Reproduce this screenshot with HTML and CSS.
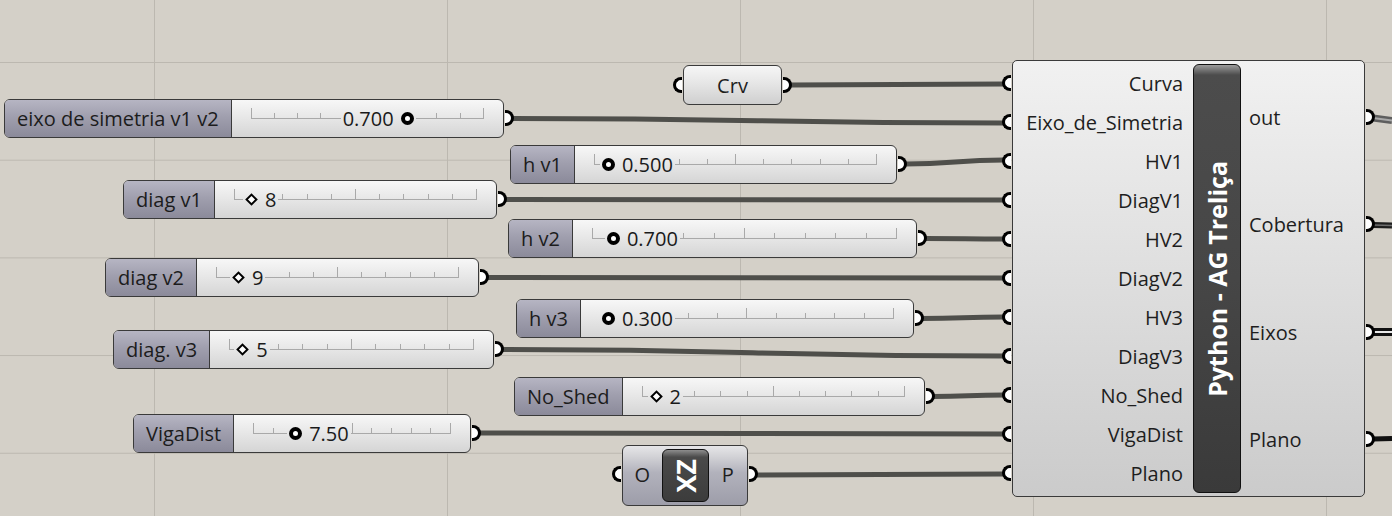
FILE: index.html
```html
<!DOCTYPE html>
<html>
<head>
<meta charset="utf-8">
<link rel="stylesheet" href="styles.css">
</head>
<body>
<div class="canvas">
  <svg class="wires" width="1392" height="516" viewBox="0 0 1392 516">
    <g class="wire">
      <path d="M791 85 C897 85 897 84 1004 84"/>
      <path d="M512 118.5 C758 118.5 758 123 1004 123"/>
      <path d="M905 164 C955 164 955 160 1004 160"/>
      <path d="M505 199.5 C755 199.5 755 200 1004 200"/>
      <path d="M925 238.5 C965 238.5 965 239 1004 239"/>
      <path d="M487 277.5 C745 277.5 745 278 1004 278"/>
      <path d="M922 318.5 C963 318.5 963 317 1004 317"/>
      <path d="M502 349.5 C753 349.5 753 356 1004 356"/>
      <path d="M933 396.5 C968 396.5 968 395 1004 395"/>
      <path d="M479 433 C741 433 741 434 1004 434"/>
      <path d="M756 475 C880 475 880 474 1004 474"/>
    </g>
    <path class="w-out-a" d="M1373 118 L1392 120.5"/>
    <path class="w-out-b" d="M1373 118 L1392 120.5"/>
    <path class="w-cob-a" d="M1373 225 L1392 225.5"/>
    <path class="w-cob-b" d="M1373 225 L1392 225.5"/>
    <path class="w-eix-a" d="M1373 332 L1392 332"/>
    <path class="w-eix-b" d="M1373 332 L1392 332"/>
    <path class="w-pla" d="M1373 439 L1392 438.5"/>
  </svg>

  <!-- sliders -->
  <div class="node slider" style="left:4px;top:99px;width:500px">
    <div class="slabel">eixo de simetria v1 v2</div>
    <div class="sbody">
      <div class="track"><i class="tick major"></i><i class="tick"></i><i class="tick"></i><i class="tick"></i><i class="tick"></i><i class="tick major"></i><i class="tick"></i><i class="tick"></i><i class="tick"></i><i class="tick"></i><i class="tick major"></i></div>
      <div class="val" style="left:109px"><span class="num">0.700</span><span class="dot"></span></div>
    </div>
    <span class="grip out"></span>
  </div>

  <div class="node slider" style="left:510px;top:145px;width:387px">
    <div class="slabel">h v1</div>
    <div class="sbody">
      <div class="track"><i class="tick major"></i><i class="tick"></i><i class="tick"></i><i class="tick"></i><i class="tick"></i><i class="tick major"></i><i class="tick"></i><i class="tick"></i><i class="tick"></i><i class="tick"></i><i class="tick major"></i></div>
      <div class="val" style="left:25px"><span class="dot"></span><span class="num">0.500</span></div>
    </div>
    <span class="grip out"></span>
  </div>

  <div class="node slider" style="left:123px;top:180px;width:374px">
    <div class="slabel">diag v1</div>
    <div class="sbody">
      <div class="track"><i class="tick major"></i><i class="tick"></i><i class="tick"></i><i class="tick"></i><i class="tick"></i><i class="tick major"></i><i class="tick"></i><i class="tick"></i><i class="tick"></i><i class="tick"></i><i class="tick major"></i></div>
      <div class="val" style="left:28px"><span class="dia"></span><span class="num">8</span></div>
    </div>
    <span class="grip out"></span>
  </div>

  <div class="node slider" style="left:508px;top:219px;width:409px">
    <div class="slabel">h v2</div>
    <div class="sbody">
      <div class="track"><i class="tick major"></i><i class="tick"></i><i class="tick"></i><i class="tick"></i><i class="tick"></i><i class="tick major"></i><i class="tick"></i><i class="tick"></i><i class="tick"></i><i class="tick"></i><i class="tick major"></i></div>
      <div class="val" style="left:32px"><span class="dot"></span><span class="num">0.700</span></div>
    </div>
    <span class="grip out"></span>
  </div>

  <div class="node slider" style="left:105px;top:258px;width:374px">
    <div class="slabel">diag v2</div>
    <div class="sbody">
      <div class="track"><i class="tick major"></i><i class="tick"></i><i class="tick"></i><i class="tick"></i><i class="tick"></i><i class="tick major"></i><i class="tick"></i><i class="tick"></i><i class="tick"></i><i class="tick"></i><i class="tick major"></i></div>
      <div class="val" style="left:33px"><span class="dia"></span><span class="num">9</span></div>
    </div>
    <span class="grip out"></span>
  </div>

  <div class="node slider" style="left:516px;top:299px;width:398px">
    <div class="slabel">h v3</div>
    <div class="sbody">
      <div class="track"><i class="tick major"></i><i class="tick"></i><i class="tick"></i><i class="tick"></i><i class="tick"></i><i class="tick major"></i><i class="tick"></i><i class="tick"></i><i class="tick"></i><i class="tick"></i><i class="tick major"></i></div>
      <div class="val" style="left:19px"><span class="dot"></span><span class="num">0.300</span></div>
    </div>
    <span class="grip out"></span>
  </div>

  <div class="node slider" style="left:113px;top:330px;width:381px">
    <div class="slabel">diag. v3</div>
    <div class="sbody">
      <div class="track"><i class="tick major"></i><i class="tick"></i><i class="tick"></i><i class="tick"></i><i class="tick"></i><i class="tick major"></i><i class="tick"></i><i class="tick"></i><i class="tick"></i><i class="tick"></i><i class="tick major"></i></div>
      <div class="val" style="left:24px"><span class="dia"></span><span class="num">5</span></div>
    </div>
    <span class="grip out"></span>
  </div>

  <div class="node slider" style="left:514px;top:377px;width:411px">
    <div class="slabel">No_Shed</div>
    <div class="sbody">
      <div class="track"><i class="tick major"></i><i class="tick"></i><i class="tick"></i><i class="tick"></i><i class="tick"></i><i class="tick major"></i><i class="tick"></i><i class="tick"></i><i class="tick"></i><i class="tick"></i><i class="tick major"></i></div>
      <div class="val" style="left:25px"><span class="dia"></span><span class="num">2</span></div>
    </div>
    <span class="grip out"></span>
  </div>

  <div class="node slider" style="left:133px;top:414px;width:338px">
    <div class="slabel">VigaDist</div>
    <div class="sbody">
      <div class="track"><i class="tick major"></i><i class="tick"></i><i class="tick"></i><i class="tick"></i><i class="tick"></i><i class="tick major"></i><i class="tick"></i><i class="tick"></i><i class="tick"></i><i class="tick"></i><i class="tick major"></i></div>
      <div class="val" style="left:53px"><span class="dot"></span><span class="num">7.50</span></div>
    </div>
    <span class="grip out"></span>
  </div>

  <!-- Crv param -->
  <div class="node param" style="left:683px;top:65px;width:99px">
    <span class="grip in"></span>
    Crv
    <span class="grip out"></span>
  </div>

  <!-- XZ plane -->
  <div class="node xz" style="left:622px;top:445px;width:126px">
    <div class="xport"><span class="grip in"></span>O</div>
    <div class="xicon"><span class="xtext">XZ</span></div>
    <div class="xport"><span class="grip out"></span>P</div>
  </div>

  <!-- Python component -->
  <div class="node comp" style="left:1012px;top:60px;width:353px">
    <div class="inputs">
      <div class="port"><span class="grip in"></span>Curva</div>
      <div class="port"><span class="grip in"></span>Eixo_de_Simetria</div>
      <div class="port"><span class="grip in"></span>HV1</div>
      <div class="port"><span class="grip in"></span>DiagV1</div>
      <div class="port"><span class="grip in"></span>HV2</div>
      <div class="port"><span class="grip in"></span>DiagV2</div>
      <div class="port"><span class="grip in"></span>HV3</div>
      <div class="port"><span class="grip in"></span>DiagV3</div>
      <div class="port"><span class="grip in"></span>No_Shed</div>
      <div class="port"><span class="grip in"></span>VigaDist</div>
      <div class="port"><span class="grip in"></span>Plano</div>
    </div>
    <div class="titlebar"><span class="title">Python - AG Treliça</span></div>
    <div class="outputs">
      <div class="oport">out<span class="grip out"></span></div>
      <div class="oport">Cobertura<span class="grip out"></span></div>
      <div class="oport">Eixos<span class="grip out"></span></div>
      <div class="oport">Plano<span class="grip out"></span></div>
    </div>
  </div>
</div>
</body>
</html>
```

FILE: styles.css
```css
html, body {
  margin: 0;
  padding: 0;
}

body {
  font-family: "Open Sans", "Noto Sans", "Liberation Sans", sans-serif;
  font-size: 20px;
  color: #1e1e1e;
}

.canvas {
  position: relative;
  width: 1392px;
  height: 516px;
  overflow: hidden;
  background-color: #d4d0c8;
  background-image:
    linear-gradient(90deg, #bcb8b0 1px, transparent 1px),
    linear-gradient(180deg, #bcb8b0 1px, transparent 1px);
  background-size: 293px 100%, 100% 97.7px;
  background-position: 154px 0, 0 62px;
}

.wires {
  position: absolute;
  left: 0;
  top: 0;
}

.wire path {
  fill: none;
  stroke: #4f4f4b;
  stroke-width: 5;
}

.w-out-a { fill: none; stroke: #5e5e5e; stroke-width: 7; }
.w-out-b { fill: none; stroke: #a8a8a8; stroke-width: 2; }
.w-cob-a { fill: none; stroke: #1e1e1e; stroke-width: 6; }
.w-cob-b { fill: none; stroke: #6e6e6e; stroke-width: 1.5; }
.w-eix-a { fill: none; stroke: #111; stroke-width: 8; }
.w-eix-b { fill: none; stroke: #e8e8e8; stroke-width: 2; }
.w-pla { fill: none; stroke: #111; stroke-width: 5; }

.node {
  position: absolute;
  box-sizing: border-box;
}

/* grips */
.grip {
  position: absolute;
  top: 50%;
  width: 6px;
  height: 10px;
  margin-top: -8.5px;
  background: #fff;
  border: 3.5px solid #000;
  z-index: 2;
}

.grip.out {
  right: -11px;
  border-left: none;
  border-radius: 0 9px 9px 0;
}

.grip.in {
  left: -11px;
  border-right: none;
  border-radius: 9px 0 0 9px;
}

/* sliders */
.slider {
  height: 39px;
  display: flex;
  border: 1.5px solid #3a3a3a;
  border-radius: 6px;
  background: linear-gradient(180deg, #f7f7f7 0%, #e8e8e8 45%, #d5d5d5 100%);
}

.slabel {
  display: flex;
  align-items: center;
  padding: 0 12px;
  white-space: nowrap;
  color: #1c1c1c;
  border-right: 1.5px solid #3a3a3a;
  border-radius: 4.5px 0 0 4.5px;
  background: linear-gradient(180deg, #b6b5c3 0%, #a09fae 45%, #8b8a9a 100%);
}

.sbody {
  flex: 1;
  position: relative;
  display: flex;
  align-items: center;
  padding: 0 19px;
}

.track {
  flex: 1;
  height: 10px;
  margin-bottom: 10px;
  display: flex;
  justify-content: space-between;
  align-items: flex-end;
  border-bottom: 1px solid #a9a9a9;
}

.tick {
  width: 1px;
  height: 5px;
  background: #a9a9a9;
}

.tick.major {
  height: 10px;
}

.val {
  position: absolute;
  top: 0;
  bottom: 0;
  display: flex;
  align-items: center;
  gap: 7px;
  padding: 0 2px;
  background: linear-gradient(180deg, #f7f7f7 0%, #e8e8e8 45%, #d5d5d5 100%);
}

.num {
  line-height: 1;
  color: #1a1a1a;
}

.dot {
  width: 5px;
  height: 5px;
  border: 4px solid #000;
  border-radius: 50%;
  background: #fff;
}

.dia {
  width: 5px;
  height: 5px;
  border: 2.5px solid #000;
  background: #fff;
  transform: rotate(45deg);
  margin: 0 2px;
}

/* Crv param */
.param {
  height: 40px;
  display: flex;
  align-items: center;
  justify-content: center;
  border: 1.5px solid #3a3a3a;
  border-radius: 6px;
  background: linear-gradient(180deg, #f6f6f6 0%, #e6e6e6 45%, #cfcfcf 100%);
}

/* XZ plane component */
.xz {
  height: 61px;
  display: flex;
  align-items: center;
  border: 1.5px solid #3a3a3a;
  border-radius: 6px;
  background: linear-gradient(180deg, #e6e6e8 0%, #d2d2d6 18%, #b2b2bc 45%, #9d9da9 100%);
}

.xport {
  flex: 1;
  position: relative;
  display: flex;
  align-items: center;
  justify-content: center;
  height: 30px;
  margin-top: -3px;
}

.xicon {
  width: 47px;
  height: 53px;
  box-sizing: border-box;
  border: 1.5px solid #111;
  border-radius: 6px;
  background: linear-gradient(180deg, #8d8d8d 0%, #4a4a4a 14%, #3c3c3c 100%);
  display: flex;
  align-items: center;
  justify-content: center;
}

.xtext {
  writing-mode: vertical-rl;
  transform: rotate(180deg);
  color: #fff;
  font-weight: 700;
  font-size: 27px;
  line-height: 1;
}

/* Python component */
.comp {
  height: 437px;
  display: flex;
  padding: 3px 0;
  border: 1.5px solid #3a3a3a;
  border-radius: 5px;
  background: linear-gradient(180deg, #f1f1f1 0%, #e4e4e4 35%, #cbcbcb 100%);
}

.inputs {
  width: 180px;
  display: flex;
  flex-direction: column;
}

.port {
  flex: 1;
  position: relative;
  display: flex;
  align-items: center;
  justify-content: flex-end;
  padding-right: 10px;
  white-space: nowrap;
}

.titlebar {
  width: 48px;
  box-sizing: border-box;
  border: 1.5px solid #111;
  border-radius: 6px;
  background: linear-gradient(180deg, #9c9c9c 0px, #4c4c4c 10px, #464646 50%, #3a3a3a 100%);
  display: flex;
  align-items: center;
  justify-content: center;
}

.title {
  writing-mode: vertical-rl;
  transform: rotate(180deg);
  color: #fff;
  font-weight: 700;
  font-size: 25px;
  white-space: nowrap;
  line-height: 1;
}

.outputs {
  flex: 1;
  display: flex;
  flex-direction: column;
}

.oport {
  flex: 1;
  position: relative;
  display: flex;
  align-items: center;
  padding-left: 8px;
}
```
